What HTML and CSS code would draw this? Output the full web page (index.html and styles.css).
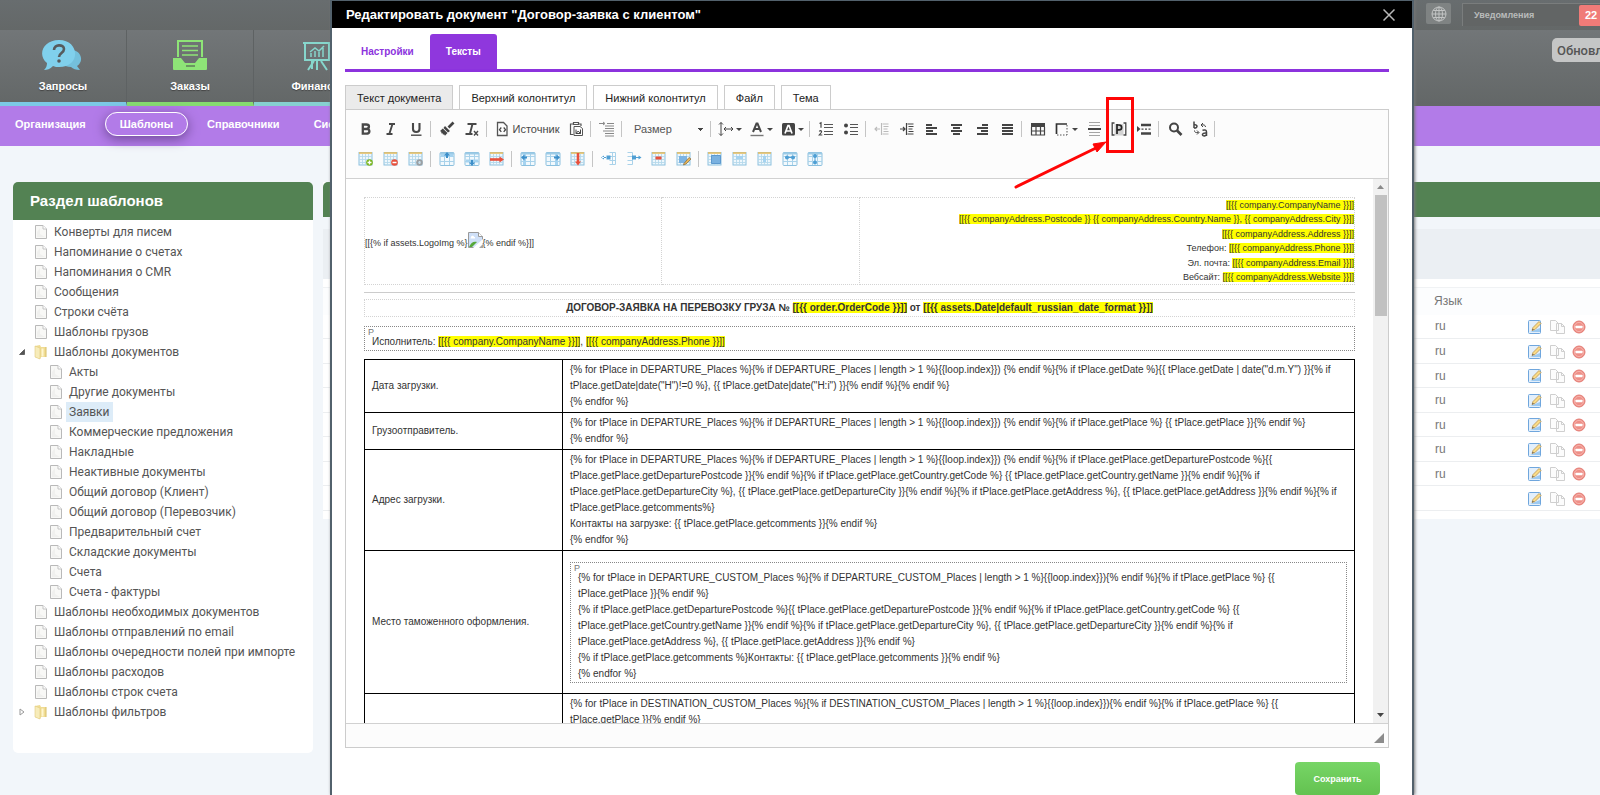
FILE: index.html
```
<!DOCTYPE html>
<html lang="ru">
<head>
<meta charset="utf-8">
<title>Шаблоны документов</title>
<link rel="stylesheet" href="styles.css">
</head>
<body>
<svg class="sprite" aria-hidden="true">
  <symbol id="page" viewBox="0 0 14 16"><path d="M1.500 1.500h7.500l3.500 3.500v9.500h-11z" fill="#f8f8f6" stroke="#b9b9b9"/><path d="M9 1.500v3.500h3.500" fill="#fff" stroke="#c4c4c4"/><path d="M3 8l3-4v6l5 3H3z" fill="#f0f0ee"/></symbol>
  <symbol id="folder" viewBox="0 0 14 16"><path d="M1 2l5-1 1 2h5v10H7l-1 2-5-2z" fill="#f0dc93"/><path d="M1 2l5 2v11l-5-2z" fill="#f7ecba" stroke="#e0cb7c" stroke-width=".6"/><path d="M7.500 4.500h2v8h-2z" fill="#fff6cf"/><path d="M12 3v10" stroke="#d8bf67"/></symbol>
  <symbol id="edit" viewBox="0 0 14 14"><rect x=".5" y=".5" width="12" height="13" rx="1" fill="#e3effb" stroke="#6fa6dd"/><path d="M2 12h10V8z" fill="#9dcaf2"/><path d="M4 10.500l1-3 6-6 2 2-6 6z" fill="#fbdc86" stroke="#b99350" stroke-width=".8"/><path d="M4 10.500l.7-1.800 1.200 1.100z" fill="#555"/></symbol>
  <symbol id="copy" viewBox="0 0 16 14"><path d="M.5.5h5l3 3v7h-8zM6.500 3.500h5l3 3v7h-8z" fill="#fcfcfc" stroke="#cfcfcf"/><path d="M11.500 3.500v3h3" fill="none" stroke="#cfcfcf"/></symbol>
  <symbol id="del" viewBox="0 0 14 14"><circle cx="7" cy="7" r="6" fill="#ee8f87" stroke="#e47c74"/><circle cx="7" cy="7" r="4.600" fill="none" stroke="#f7bbb5" stroke-width=".8"/><rect x="3.500" y="5.800" width="7" height="2.400" rx=".5" fill="#fff"/></symbol>
  <symbol id="tb" viewBox="0 0 16 16"><rect x="1" y="1.500" width="13" height="12.500" fill="#eef7fc" stroke="#8cc0de"/><path d="M1 5.500h13M1 8.500h13M1 11.500h13M4.500 3v11M7.500 3v11M10.500 3v11" stroke="#b5d8eb" stroke-width=".9"/><path d="M1 2h13" stroke="#e6bd62" stroke-width="1.600"/></symbol>
  <symbol id="tc" viewBox="0 0 16 16"><rect x="1" y="1.500" width="14" height="13" rx="1" fill="#f2f9fd" stroke="#8cc0de"/><path d="M1 5.500h14M1 10.500h14M5.500 3v11M10.500 3v11" stroke="#a9d2ea"/><path d="M1 2.500h14" stroke="#9ccbe6" stroke-width="2"/></symbol>
</svg>

<header class="top">
  <div class="topbar">
    <button class="globe" aria-label="Язык"><svg viewBox="0 0 16 16" width="16" height="16" fill="none" stroke="#c2c4c4"><circle cx="8" cy="8" r="7"/><ellipse cx="8" cy="8" rx="3.500" ry="7"/><path d="M1 8h14M8 1v14M2.200 4.500h11.600M2.200 11.500h11.600"/></svg></button>
    <div class="notice"><span>Уведомления</span><b>22</b></div>
  </div>
  <div class="mainbar">
    <nav class="tiles">
      <a href="#" class="tile t1"><svg viewBox="0 0 42 32" width="42" height="32"><path d="M30 11c10 1 12 12 5 16l3 4c-4 0-7-1-9-3-4 0-6-1-8-3 9-2 11-8 9-14z" fill="#74c0dc"/><path d="M17 1c21 0 22 27 0 27-2 0-4 0-6-1-3 3-6 4-9 4 2-2 3-4 3-7C-5 16 1 1 17 1z" fill="#80d0ec"/><path d="M12 11c0-6 10-6 10-1 0 4-5 4-5 8" fill="none" stroke="#565b5d" stroke-width="2.600"/><circle cx="17" cy="22" r="1.800" fill="#565b5d"/></svg>Запросы</a>
      <a href="#" class="tile t2"><svg viewBox="0 0 36 32" width="36" height="32"><path d="M6 18V2h24v16" fill="none" stroke="#8ee477" stroke-width="2"/><path d="M10 7h16M10 11.500h16M10 16h16" stroke="#8ee477" stroke-width="1.600"/><path d="M1 19h8l4 5h10l4-5h8v11q0 1-1 1H2q-1 0-1-1z" fill="#8ee477"/><path d="M14 27h9" stroke="#5f7d5a" stroke-width="1.500"/></svg>Заказы</a>
      <a href="#" class="tile t3"><svg viewBox="0 0 36 32" width="36" height="32" fill="none" stroke="#86d6cc" stroke-width="2"><path d="M4 4h28M6 4v17h24V4M15 22l-6 9M13 22v8M22 22l6 9M18 22v9"/><path d="M12 18v-4M16 18v-6M20 18v-5M24 18V9M11 13l5-4 4 3 5-5" stroke-width="1.500"/></svg>Финансы</a>
    </nav>
    <button class="refresh">Обновления</button>
  </div>
</header>
<nav class="subnav">
  <a href="#">Организация</a><a href="#" class="current">Шаблоны</a><a href="#">Справочники</a><a href="#" class="last">Система</a>
</nav>

<main class="page">
  <section class="card tree">
    <h2>Раздел шаблонов</h2>
    <ul>
      <li><svg><use href="#page"/></svg><span>Конверты для писем</span></li>
      <li><svg><use href="#page"/></svg><span>Напоминание о счетах</span></li>
      <li><svg><use href="#page"/></svg><span>Напоминания о CMR</span></li>
      <li><svg><use href="#page"/></svg><span>Сообщения</span></li>
      <li><svg><use href="#page"/></svg><span>Строки счёта</span></li>
      <li><svg><use href="#page"/></svg><span>Шаблоны грузов</span></li>
      <li class="parent"><svg class="tog" viewBox="0 0 6 6"><path d="M5.500.5v5h-5z" fill="#555" stroke="#333" stroke-width=".6"/></svg><svg><use href="#folder"/></svg><span>Шаблоны документов</span></li>
      <li class="sub"><svg><use href="#page"/></svg><span>Акты</span></li>
      <li class="sub"><svg><use href="#page"/></svg><span>Другие документы</span></li>
      <li class="sub"><svg><use href="#page"/></svg><span class="sel">Заявки</span></li>
      <li class="sub"><svg><use href="#page"/></svg><span>Коммерческие предложения</span></li>
      <li class="sub"><svg><use href="#page"/></svg><span>Накладные</span></li>
      <li class="sub"><svg><use href="#page"/></svg><span>Неактивные документы</span></li>
      <li class="sub"><svg><use href="#page"/></svg><span>Общий договор (Клиент)</span></li>
      <li class="sub"><svg><use href="#page"/></svg><span>Общий договор (Перевозчик)</span></li>
      <li class="sub"><svg><use href="#page"/></svg><span>Предварительный счет</span></li>
      <li class="sub"><svg><use href="#page"/></svg><span>Складские документы</span></li>
      <li class="sub"><svg><use href="#page"/></svg><span>Счета</span></li>
      <li class="sub"><svg><use href="#page"/></svg><span>Счета - фактуры</span></li>
      <li><svg><use href="#page"/></svg><span>Шаблоны необходимых документов</span></li>
      <li><svg><use href="#page"/></svg><span>Шаблоны отправлений по email</span></li>
      <li><svg><use href="#page"/></svg><span>Шаблоны очередности полей при импорте</span></li>
      <li><svg><use href="#page"/></svg><span>Шаблоны расходов</span></li>
      <li><svg><use href="#page"/></svg><span>Шаблоны строк счета</span></li>
      <li class="parent"><svg class="tog" viewBox="0 0 6 8"><path d="M1 1l4 3-4 3z" fill="#fff" stroke="#999"/></svg><svg><use href="#folder"/></svg><span>Шаблоны фильтров</span></li>
    </ul>
  </section>
  <section class="list">
    <div class="listhead"></div>
    <div class="filter"></div>
    <table>
      <thead><tr><th>Язык</th><th aria-label="Действия"></th></tr></thead>
      <tbody>
        <tr><td>ru</td><td><svg><use href="#edit"/></svg><svg class="cp"><use href="#copy"/></svg><svg><use href="#del"/></svg></td></tr>
        <tr><td>ru</td><td><svg><use href="#edit"/></svg><svg class="cp"><use href="#copy"/></svg><svg><use href="#del"/></svg></td></tr>
        <tr><td>ru</td><td><svg><use href="#edit"/></svg><svg class="cp"><use href="#copy"/></svg><svg><use href="#del"/></svg></td></tr>
        <tr><td>ru</td><td><svg><use href="#edit"/></svg><svg class="cp"><use href="#copy"/></svg><svg><use href="#del"/></svg></td></tr>
        <tr><td>ru</td><td><svg><use href="#edit"/></svg><svg class="cp"><use href="#copy"/></svg><svg><use href="#del"/></svg></td></tr>
        <tr><td>ru</td><td><svg><use href="#edit"/></svg><svg class="cp"><use href="#copy"/></svg><svg><use href="#del"/></svg></td></tr>
        <tr><td>ru</td><td><svg><use href="#edit"/></svg><svg class="cp"><use href="#copy"/></svg><svg><use href="#del"/></svg></td></tr>
        <tr><td></td><td><svg><use href="#edit"/></svg><svg class="cp"><use href="#copy"/></svg><svg><use href="#del"/></svg></td></tr>
      </tbody>
    </table>
  </section>
</main>

<div class="modal" role="dialog" aria-labelledby="mt">
  <div class="mhead"><h1 id="mt">Редактировать документ "Договор-заявка с клиентом"</h1><button aria-label="Закрыть"><svg viewBox="0 0 12 12" width="12" height="12"><path d="M.5.5l11 11M11.500.5l-11 11" stroke="#b8b8b8" stroke-width="1.500"/></svg></button></div>
  <div class="mbody">
    <div class="tabs"><button>Настройки</button><button class="on">Тексты</button></div>
    <div class="parts"><button class="on">Текст документа</button><button>Верхний колонтитул</button><button>Нижний колонтитул</button><button>Файл</button><button>Тема</button></div>
    <div class="editor">
      <div class="toolbar">
        <div class="trow">
          <button aria-label="Полужирный"><svg viewBox="0 0 16 16"><path d="M4.800 3.500h3.500c3.600 0 3.400 4.200.2 4.300 4 .2 3.800 4.900-.3 4.900H4.800zM5 8h4" fill="none" stroke="#484848" stroke-width="2.300"/></svg></button>
          <button aria-label="Курсив"><svg viewBox="0 0 16 16"><path d="M6 3h6M3.500 13h6M9.500 3l-3.200 10" fill="none" stroke="#484848" stroke-width="1.900"/></svg></button>
          <button aria-label="Подчёркнутый"><svg viewBox="0 0 16 16"><path d="M5 2v6c0 4 6.500 4 6.500 0V2" fill="none" stroke="#484848" stroke-width="2.100"/><path d="M3 14.200h10.500" stroke="#484848" stroke-width="1.400"/></svg></button>
          <i></i>
          <button aria-label="Копировать форматирование"><svg viewBox="0 0 16 16"><path d="M14.500 1.500l-5 5" stroke="#444" stroke-width="2.600"/><path d="M6 5l5 5-2 1.500-4.500-4.500zM3.800 7.500l4.700 4.500-2.500 2.800-1-1.500-1 .5-.5-1.500-1.500 0 .5-1.300L1 10z" fill="#444"/></svg></button>
          <button aria-label="Убрать форматирование"><svg viewBox="0 0 16 16"><path d="M3.500 3h9M8.500 3L6 12.500M1.500 13h7" fill="none" stroke="#484848" stroke-width="1.900"/><path d="M10 10l4 4.500M14 10l-4 4.500" stroke="#484848" stroke-width="1.400"/></svg></button>
          <i></i>
          <button class="src"><svg viewBox="0 0 16 16"><path d="M3.500 1.500h6l3.500 3.500v9.500H3.500z" fill="none" stroke="#555" stroke-width="1.300"/><path d="M7.300 6.500L5.500 8.700l1.800 2.200M9.700 6.500l1.800 2.200-1.800 2.200" fill="none" stroke="#444" stroke-width="1.300"/></svg>Источник</button>
          <button aria-label="Вставить из Word"><svg viewBox="0 0 16 16"><path d="M5 3H2.500v10.500h3M10 3h3v2M5.500 1.500h5v2h-5z" fill="none" stroke="#555" stroke-width="1.200"/><path d="M6 5.500h6l2.500 2v7H6z" fill="#fff" stroke="#555"/><path d="M8 8.500v4h4.500v-4M8 12.500l2.200-2.500 2.300 2.500" fill="none" stroke="#444"/></svg></button>
          <i></i>
          <button aria-label="Отступ абзаца"><svg viewBox="0 0 16 16"><path d="M0 2.500h5M4 1l2 1.500L4 4M8 2.500h7M6 5h9M6 7.500h9M4 10h11M6 12.500h9M6 15h9" fill="none" stroke="#888"/></svg></button>
          <i></i>
          <select aria-label="Размер"><option>Размер</option></select>
          <i></i>
          <button class="dd" aria-label="Межстрочный интервал"><svg viewBox="0 0 16 16"><path d="M3 1.500v13M1 3.500l2-2 2 2M1 12.500l2 2 2-2M6 8h9M8 6L6 8l2 2M13 6l2 2-2 2" fill="none" stroke="#444"/></svg></button>
          <button class="dd" aria-label="Цвет текста"><svg viewBox="0 0 16 16"><path d="M4 11l3.500-8.500h1L12 11M5.500 8h5" fill="none" stroke="#484848" stroke-width="2"/><path d="M1.500 14.500h13" stroke="#777" stroke-width="1.400"/></svg></button>
          <button class="dd" aria-label="Цвет фона"><svg viewBox="0 0 16 16"><rect x="2" y="2" width="13" height="12.500" rx="1.500" fill="#444"/><path d="M5 12.500l3-8h1l3 8M6 10h5" fill="none" stroke="#fff" stroke-width="1.700"/></svg></button>
          <i></i>
          <button aria-label="Нумерованный список"><svg viewBox="0 0 16 16"><path d="M1.500 2.500l1.500-.8v5M1.300 10.500c1-1.500 3-.5 2 1l-2 2.500h3" fill="none" stroke="#484848" stroke-width="1.200"/><path d="M6 3.500h9M6 6.500h9M6 10.500h9M6 13.500h9" stroke="#555"/></svg></button>
          <button aria-label="Маркированный список"><svg viewBox="0 0 16 16"><circle cx="3" cy="4.500" r="2" fill="#444"/><circle cx="3" cy="11.500" r="2" fill="#444"/><path d="M7 3.500h8M7 6.500h8M7 10.500h8M7 13.500h8" stroke="#555"/></svg></button>
          <i></i>
          <button class="dim" aria-label="Уменьшить отступ"><svg viewBox="0 0 16 16"><path d="M8.500 3h6M9.500 5.500h5M9.500 8h4M9.500 10.500h5M8.500 13h6M7.500 2v12M6 8H1M3 6L1 8l2 2" fill="none" stroke="#444" stroke-width="1.100"/></svg></button>
          <button aria-label="Увеличить отступ"><svg viewBox="0 0 16 16"><path d="M8.500 3h6M9.500 5.500h5M9.500 8h4M9.500 10.500h5M8.500 13h6M7.500 2v12M1 8h5M4 6l2 2-2 2" fill="none" stroke="#444" stroke-width="1.200"/></svg></button>
          <button aria-label="По левому краю"><svg viewBox="0 0 16 16"><path d="M2 4h6M2 7h11M2 10h7M2 13h11" stroke="#444" stroke-width="1.800"/></svg></button>
          <button aria-label="По центру"><svg viewBox="0 0 16 16"><path d="M2 4h11M4 7h7M2 10h11M4 13h7" stroke="#444" stroke-width="1.800"/></svg></button>
          <button aria-label="По правому краю"><svg viewBox="0 0 16 16"><path d="M8 4h6M3 7h11M7 10h7M3 13h11" stroke="#444" stroke-width="1.800"/></svg></button>
          <button aria-label="По ширине"><svg viewBox="0 0 16 16"><path d="M3 4h11M3 7h11M3 10h11M3 13h11" stroke="#444" stroke-width="1.800"/></svg></button>
          <i></i>
          <button aria-label="Таблица"><svg viewBox="0 0 16 16"><path d="M1.500 6v8h13V6M1.500 10h13M6 6v8M10.500 6v8" fill="none" stroke="#444" stroke-width="1.200"/><path d="M1 2h14v4H1z" fill="#444"/></svg></button>
          <button class="dd" aria-label="Границы"><svg viewBox="0 0 16 16"><path d="M2.500 13V3H13" fill="none" stroke="#333" stroke-width="1.700"/><path d="M13 4v10M3 14h10" stroke="#555" stroke-dasharray="1.500 1.500"/></svg></button>
          <button aria-label="Линия"><svg viewBox="0 0 16 16"><path d="M3 1.500h11M3 4.500h11M3 11.500h11M3 14.500h11" stroke="#a5a5a5"/><path d="M2 8h13" stroke="#444" stroke-width="2"/></svg></button>
          <button aria-label="Показать блоки"><svg viewBox="0 0 16 16"><rect x="3.500" y="3" width="9" height="11.500" fill="#d2d2d2"/><path d="M3.500 2H1.200v12h2.300M12.500 2h2.300v12h-2.300" fill="none" stroke="#444" stroke-width="1.300"/><path d="M6 13V3M6 4h2c3.500 0 3.500 4.800 0 4.800H6" fill="none" stroke="#222" stroke-width="1.700"/></svg></button>
          <button aria-label="Разрыв страницы"><svg viewBox="0 0 16 16"><path d="M1 5l3.500 3L1 11z" fill="#444"/><path d="M5 4h10M5 12.500h10" stroke="#444" stroke-width="2.400"/><path d="M5.500 8.200h10" stroke="#444" stroke-width="1.200" stroke-dasharray="2 1.500"/></svg></button>
          <i></i>
          <button aria-label="Найти"><svg viewBox="0 0 16 16"><circle cx="7" cy="6.500" r="4" fill="none" stroke="#444" stroke-width="2"/><path d="M10 9.500l4.500 4.500" stroke="#444" stroke-width="2.600"/></svg></button>
          <button aria-label="Заменить"><svg viewBox="0 0 16 16"><path d="M2 .5V7M2 4c4-1 4 3.500 0 3M10.500 9.200c3-.7 4 0 4 1.800v4M14.500 12c-5-.5-5 3-2 3l2-1" fill="none" stroke="#444" stroke-width="1.500"/><path d="M13.500 6c0-2-2-2.500-4-2M11 2L9 4l2 2M2.500 9.500c0 2 1.500 2.500 4 2M5 9.500l2 2-2 2" fill="none" stroke="#444"/></svg></button>
          <i></i>
        </div>
        <div class="trow">
          <button aria-label="Добавить таблицу"><svg><use href="#tb"/><circle cx="11.500" cy="11.500" r="3.300" fill="#7ab51d"/><path d="M9.500 11.500h4M11.500 9.500v4" stroke="#fff" stroke-width="1.300"/></svg></button>
          <button aria-label="Удалить таблицу"><svg><use href="#tb"/><circle cx="11.500" cy="11.500" r="3.300" fill="#e8503c"/><path d="M9.500 11.500h4" stroke="#fff" stroke-width="1.500"/></svg></button>
          <button aria-label="Свойства таблицы"><svg><use href="#tb"/><circle cx="11.500" cy="11.500" r="2.300" fill="none" stroke="#9a9fa3" stroke-width="2"/></svg></button>
          <i></i>
          <button aria-label="Строка сверху"><svg><use href="#tc"/><path d="M2 3h12v3H2z" fill="#a5d3f0"/><path d="M8 1l3 3.500H9V7H7V4.500H5z" fill="#3d8fc9"/></svg></button>
          <button aria-label="Строка снизу"><svg><use href="#tc"/><path d="M2 8.500h12v3H2z" fill="#a5d3f0"/><path d="M8 15l3-3.500H9V9H7v2.500H5z" fill="#3d8fc9"/></svg></button>
          <button aria-label="Удалить строку"><svg><use href="#tb"/><path d="M1 8.500h10" stroke="#e8503c" stroke-width="2.600"/><path d="M10.500 5.500l4.500 3-4.500 3z" fill="#e8503c"/></svg></button>
          <i></i>
          <button aria-label="Столбец слева"><svg><use href="#tc"/><path d="M3 3h3v11H3z" fill="#a5d3f0"/><path d="M1 6.500l3.500-3v2H7v2H4.500v2z" fill="#3d8fc9"/></svg></button>
          <button aria-label="Столбец справа"><svg><use href="#tc"/><path d="M10 3h3v11h-3z" fill="#a5d3f0"/><path d="M15 6.500l-3.500-3v2H9v2h2.500v2z" fill="#3d8fc9"/></svg></button>
          <button aria-label="Удалить столбец"><svg><use href="#tb"/><path d="M8 2v9" stroke="#e8503c" stroke-width="2.600"/><path d="M5 10.500l3 4 3-4z" fill="#e8503c"/></svg></button>
          <i></i>
          <button aria-label="Ячейка слева"><svg><path d="M8.500 1.500h6v12h-6M8.500 5.500h6M8.500 9.500h6M11.500 1.500v12" fill="none" stroke="#a9d2ea"/><path d="M5.500 4.500h4v4h-4zM1 6h4v1H1zM3 4.500L0 6.500l3 2z" fill="#4f9fd4"/></svg></button>
          <button aria-label="Ячейка справа"><svg><path d="M1.500 1.500h5v12h-5M1.500 5.500h5M1.500 9.500h5" fill="none" stroke="#a9d2ea"/><path d="M6 4.500h4v4H6zM10 6h3v1h-3zM12.500 4.500l3 2-3 2z" fill="#4f9fd4"/></svg></button>
          <button aria-label="Удалить ячейку"><svg><use href="#tb"/><path d="M4.500 5.500h6v3h-6z" fill="#e8503c"/></svg></button>
          <button aria-label="Свойства ячейки"><svg><use href="#tb"/><path d="M3 5h8v7H3z" fill="#7db4e2"/><path d="M8 12.500l5-6 2 1.500-5 5-2.500 1z" fill="#e9b656" stroke="#8a6a3a" stroke-width=".7"/></svg></button>
          <i></i>
          <button aria-label="Выделить таблицу"><svg><use href="#tb"/><path d="M4.500 4.500h9v8h-9z" fill="#79b1e0" stroke="#5d99cf"/></svg></button>
          <button aria-label="Выделить строку"><svg><use href="#tb"/><path d="M4 5h7v3H4z" fill="#a5d3f0"/></svg></button>
          <button aria-label="Выделить столбец"><svg><use href="#tb"/><path d="M6 5h3v6H6z" fill="#a5d3f0"/></svg></button>
          <button aria-label="Объединить ячейки"><svg><use href="#tc"/><circle cx="5" cy="6.500" r="2" fill="#4f9fd4"/><circle cx="11" cy="6.500" r="2" fill="#4f9fd4"/><path d="M3 6.500h10" stroke="#4f9fd4"/></svg></button>
          <button aria-label="Разделить ячейки"><svg><use href="#tc"/><circle cx="8" cy="5" r="2" fill="#4f9fd4"/><circle cx="8" cy="11.500" r="2" fill="#4f9fd4"/><path d="M8 3v10" stroke="#4f9fd4"/></svg></button>
        </div>
      </div>
      <div class="view">
        <div class="doc">
          <table class="company">
            <tr>
              <td class="logo">[[{% if assets.LogoImg %}<svg viewBox="0 0 15 16" width="15" height="16"><path d="M.5.5h10l4 4v11H.5z" fill="#cfe0f8" stroke="#9a9a9a"/><path d="M10.500.5v4h4" fill="#fff" stroke="#9a9a9a"/><path d="M3 5c1-2 3-1 3 0h1v1.500H2.500z" fill="#fff"/><path d="M1 15c2-5 5-6 8-5l-5 5z" fill="#56a83a"/><path d="M5 16L15 7v9z" fill="#fff"/><path d="M11 16l4-4v4z" fill="#a5a5a5"/></svg>{% endif %}]]</td>
              <td class="gap"></td>
              <td class="info"><mark>[[{{ company.CompanyName }}]]</mark><br><mark>[[{{ companyAddress.Postcode }} {{ companyAddress.Country.Name }}, {{ companyAddress.City }}]]</mark><br><mark>[[{{ companyAddress.Address }}]]</mark><br>Телефон: <mark>[[{{ companyAddress.Phone }}]]</mark><br>Эл. почта: <mark>[[{{ companyAddress.Email }}]]</mark><br>Вебсайт: <mark>[[{{ companyAddress.Website }}]]</mark></td>
            </tr>
          </table>
          <hr>
          <div class="doctitle">ДОГОВОР-ЗАЯВКА НА ПЕРЕВОЗКУ ГРУЗА № <mark>[[{{ order.OrderCode }}]]</mark> от <mark>[[{{ assets.Date|default_russian_date_format }}]]</mark></div>
          <p class="block">Исполнитель: <mark>[[{{ company.CompanyName }}]]</mark>, <mark>[[{{ companyAddress.Phone }}]]</mark></p>
          <table class="terms">
            <tr><td>Дата загрузки.</td><td>{% for tPlace in DEPARTURE_Places %}{% if DEPARTURE_Places | length &gt; 1 %}{{loop.index}}) {% endif %}{% if tPlace.getDate %}{{ tPlace.getDate | date("d.m.Y") }}{% if tPlace.getDate|date("H")!=0 %}, {{ tPlace.getDate|date("H:i") }}{% endif %}{% endif %}<br>{% endfor %}</td></tr>
            <tr><td>Грузоотправитель.</td><td>{% for tPlace in DEPARTURE_Places %}{% if DEPARTURE_Places | length &gt; 1 %}{{loop.index}}) {% endif %}{% if tPlace.getPlace %} {{ tPlace.getPlace }}{% endif %}<br>{% endfor %}</td></tr>
            <tr><td>Адрес загрузки.</td><td>{% for tPlace in DEPARTURE_Places %}{% if DEPARTURE_Places | length &gt; 1 %}{{loop.index}}) {% endif %}{% if tPlace.getPlace.getDeparturePostcode %}{{ tPlace.getPlace.getDeparturePostcode }}{% endif %}{% if tPlace.getPlace.getCountry.getCode %} {{ tPlace.getPlace.getCountry.getName }}{% endif %}{% if tPlace.getPlace.getDepartureCity %}, {{ tPlace.getPlace.getDepartureCity }}{% endif %}{% if tPlace.getPlace.getAddress %}, {{ tPlace.getPlace.getAddress }}{% endif %}{% if tPlace.getPlace.getcomments%}<br>Контакты на загрузке: {{ tPlace.getPlace.getcomments }}{% endif %}<br>{% endfor %}</td></tr>
            <tr><td>Место таможенного оформления.</td><td><p class="block">{% for tPlace in DEPARTURE_CUSTOM_Places %}{% if DEPARTURE_CUSTOM_Places | length &gt; 1 %}{{loop.index}}){% endif %}{% if tPlace.getPlace %} {{ tPlace.getPlace }}{% endif %}<br>{% if tPlace.getPlace.getDeparturePostcode %}{{ tPlace.getPlace.getDeparturePostcode }}{% endif %}{% if tPlace.getPlace.getCountry.getCode %} {{ tPlace.getPlace.getCountry.getName }}{% endif %}{% if tPlace.getPlace.getDepartureCity %}, {{ tPlace.getPlace.getDepartureCity }}{% endif %}{% if tPlace.getPlace.getAddress %}, {{ tPlace.getPlace.getAddress }}{% endif %}<br>{% if tPlace.getPlace.getcomments %}Контакты: {{ tPlace.getPlace.getcomments }}{% endif %}<br>{% endfor %}</p></td></tr>
            <tr><td></td><td>{% for tPlace in DESTINATION_CUSTOM_Places %}{% if DESTINATION_CUSTOM_Places | length &gt; 1 %}{{loop.index}}){% endif %}{% if tPlace.getPlace %} {{ tPlace.getPlace }}{% endif %}</td></tr>
          </table>
        </div>
        <div class="scroll"><svg viewBox="0 0 7 4"><path d="M0 4l3.500-4L7 4z" fill="#8a8a8a"/></svg><div></div><svg viewBox="0 0 7 4"><path d="M0 0l3.500 4L7 0z" fill="#444"/></svg></div>
      </div>
      <div class="foot"><svg viewBox="0 0 10 10" width="10" height="10"><path d="M10 0v10H0z" fill="#8c8c8c"/></svg></div>
    </div>
    <div class="actions"><button>Сохранить</button></div>
  </div>
  <svg class="pointer" viewBox="0 0 122 94" width="122" height="94" fill="none" stroke="#ff0606"><rect x="93.500" y="2.500" width="25" height="53" stroke-width="3"/><path d="M2 91L84 51" stroke-width="3" stroke-linecap="round"/><path d="M92 46l-9 10-4-8z" fill="#ff0606" stroke-width="1"/></svg>
</div>
</body>
</html>
```
FILE: styles.css
```
* { box-sizing: border-box; }
body { margin: 0; height: 100vh; overflow: hidden; position: relative; background: #f2f6fa; font-family: "Liberation Sans", Arial, sans-serif; font-size: 12px; color: #555; }
button { border: 0; background: none; padding: 0; font: inherit; color: inherit; }
a { text-decoration: none; color: #fff; }
.sprite { position: absolute; width: 0; height: 0; }

.topbar { height: 30px; background: linear-gradient(#686d6f, #646868); display: flex; justify-content: flex-end; align-items: flex-start; gap: 11px; padding-top: 3px; overflow: hidden; }
.globe { width: 25px; height: 21px; background: #7f8383; border-radius: 2px; display: grid; place-items: center; }
.notice { width: 138px; height: 23px; border: 1px solid #7a7d7d; border-width: 1px 0 0 1px; background: #626565; display: flex; justify-content: space-between; align-items: center; padding-left: 11px; color: #b9bbbb; font-weight: bold; font-size: 9px; }
.notice b { width: 21px; height: 21px; line-height: 20px; padding-left: 6px; background: #f07b78; color: #fff; font-size: 11px; border-radius: 2px 0 0 2px; overflow: hidden; }
.mainbar { height: 76px; background: linear-gradient(#727678, #636767); display: flex; justify-content: space-between; align-items: flex-start; }
.tiles { display: flex; height: 100%; }
.tile { width: 127px; display: flex; flex-direction: column; align-items: center; gap: 7px; padding-top: 9px; font-size: 11px; line-height: 16px; font-weight: bold; border-right: 1px solid #5e6263; border-bottom: 4px solid; text-shadow: 0 1px 1px #444; color: #fff; }
.t1 { border-bottom-color: #7cc9e6; }
.t2 { border-bottom-color: #86db70; }
.t3 { border-bottom-color: #86d0d0; }
.refresh { margin-top: 8px; width: 48px; height: 24px; padding-left: 5px; background: #c5c6c6; border-radius: 5px 0 0 5px; font: 500 13px Roboto, sans-serif; color: #555; text-align: left; overflow: hidden; }
.subnav { height: 40px; background: #b27be8; display: flex; align-items: center; padding-left: 15px; gap: 19px; font-weight: bold; font-size: 11px; }
.subnav a { padding-bottom: 4px; }
.subnav .last { margin-left: 15px; }
.subnav .current { height: 24px; margin-bottom: 4px; line-height: 22px; padding: 0 14px; border: 1px solid #fff; border-radius: 12px; box-shadow: 0 3px 12px #6f4a97; }

.page { display: flex; align-items: flex-start; gap: 10px; padding: 36px 0 0 13px; }
.card { width: 300px; flex: none; background: #fff; border-radius: 5px; }
.tree h2 { margin: 0; height: 38px; line-height: 38px; padding-left: 17px; background: #538253; color: #fff; font-size: 15px; border-radius: 5px 5px 0 0; }
.tree ul { list-style: none; margin: 0; padding: 2px 0 31px 21px; font: 12px/20px Roboto, "Noto Sans", sans-serif; }
.tree li { display: flex; align-items: center; height: 20px; white-space: nowrap; }
.tree li svg { width: 14px; height: 16px; }
.tree li span { padding: 0 3px; margin-left: 3px; }
.tree .sub { padding-left: 15px; }
.tree .parent { margin-left: -15px; }
.tree li .tog { width: 6px; height: 8px; margin-right: 9px; }
.tree .sel { background: #ddecf8; }

.list { flex: 1; background: #fff; padding-bottom: 8px; }
.listhead { height: 35px; background: #538253; border-radius: 5px 0 0 0; }
.filter { height: 62px; border-top: 12px solid #f2f6fa; background: #ebeff3; margin-bottom: 8px; }
.list table { width: 100%; border-collapse: collapse; border-top: 1px solid #f0f2f4; }
.list th { height: 27px; text-align: left; background: #fcfdfe; color: #777; font-weight: normal; font-size: 12px; padding: 0 0 0 1111px; }
.list td { height: 24px; padding: 0 0 0 1112px; color: #777; line-height: 16px; border-bottom: 1px solid #eceef0; }
.list tr:nth-child(even) td { height: 25px; }
.list th + th, .list td + td { padding: 0; width: 72px; }
.list td svg { width: 14px; height: 14px; margin-right: 8px; vertical-align: middle; }
.list td .cp { width: 16px; margin-right: 6px; }
.list td:last-child { white-space: nowrap; }

.modal { position: absolute; top: 0; bottom: 0; left: 330px; right: 186px; background: #fff; border: 2px solid #52616c; border-width: 1px 2px 0 2px; box-shadow: 1px 0 3px #777; }
.mhead { height: 27px; background: #000; display: flex; justify-content: space-between; align-items: center; padding: 0 17px 0 14px; }
.mhead h1 { margin: 0; color: #fff; font-size: 13px; }
.mhead svg { display: block; }
.mbody { padding: 6px 23px 0 13px; }
.tabs { display: flex; height: 38px; border-bottom: 3px solid #8c33dd; font-weight: bold; font-size: 10px; color: #8c33dd; }
.tabs button { padding: 0 16px; }
.tabs .on { background: #8f37dd; color: #fff; border-radius: 3px 3px 0 0; }
.parts { display: flex; gap: 6px; margin-top: 13px; color: #222; font-size: 11px; }
.parts button { height: 24px; padding: 0 11px; border: 1px solid #ccc; border-bottom: 0; background: #fff; }
.parts .on { background: #ebebeb; }
.editor { border: 1px solid #ccc; }
.toolbar { height: 69px; background: #fcfcfc; border-bottom: 1px solid #d1d1d1; padding: 4px 7px; }
.trow { display: flex; height: 30px; align-items: center; color: #484848; font-size: 11px; }
.trow i { width: 1px; height: 16px; margin: 0 3px 0 2px; background: #c5c5c5; }
.trow button { width: 25px; height: 28px; display: flex; align-items: center; justify-content: center; flex: none; }
.trow svg { width: 16px; height: 16px; flex: none; }
.trow .src { width: 73px; gap: 3px; }
.trow .dim { opacity: .35; }
.trow .dd { width: 31px; justify-content: flex-start; padding-left: 4px; gap: 2px; }
.trow .dd::after { content: ""; border: 3px solid transparent; border-top-color: #444; border-bottom: 0; }
.trow select { width: 83px; height: 26px; border: 0; padding: 0 0 0 9px; appearance: none; font: 11px "Liberation Sans", sans-serif; color: #555; background: conic-gradient(from -45deg at 50% 100%, #444 90deg, transparent 0) 73px 12px / 6px 3px no-repeat; background: linear-gradient(#444, #444) 73px 12px / 5px 1px no-repeat, linear-gradient(#444, #444) 74px 13px / 3px 1px no-repeat, linear-gradient(#444, #444) 75px 14px / 1px 1px no-repeat; }

.view { height: 544px; display: flex; overflow: hidden; }
.doc { flex: 1; min-width: 0; padding: 18px 18px 0; font-size: 10px; line-height: 16px; color: #333; }
.doc mark { background: #ff0; color: #333; }
.company { width: 100%; border-collapse: collapse; font-size: 9px; line-height: 1.6; }
.company td { border: 1px dotted #d3d3d3; padding: 0; }
.company .logo { width: 30%; }
.company .gap { width: 20%; }
.company .info { text-align: right; }
.logo svg { vertical-align: -2px; }
.doc hr { margin: 7px 0 6px; border: 0; height: 1px; background: #ccc; }
.doctitle { border: 1px dotted #d3d3d3; text-align: center; font-weight: bold; }
.block { margin: 9px 0 8px; border: 1px dotted #888; padding: 7px 7px 0; position: relative; }
.block::before { content: "P"; position: absolute; left: 3px; top: 1px; font-size: 9px; line-height: 9px; color: #777; }
.terms { width: 100%; border-collapse: collapse; }
.terms td { border: 1px solid #000; padding: 2px 7px; }
.terms td:first-child { width: 20%; }
.scroll { width: 15px; background: #f1f1f1; display: flex; flex-direction: column; align-items: center; padding: 6px 0; gap: 6px; }
.scroll svg { width: 7px; height: 4px; }
.scroll div { width: 12px; height: 121px; background: #c1c1c1; margin-bottom: auto; }
.foot { height: 24px; background: #fcfcfc; border-top: 1px solid #d1d1d1; display: flex; justify-content: flex-end; align-items: flex-end; padding: 4px; }
.actions { display: flex; justify-content: flex-end; padding: 14px 9px 0 0; }
.actions button { width: 85px; height: 33px; border-radius: 4px; background: linear-gradient(#77d566, #63c250); color: #fff; font-weight: bold; font-size: 9px; }
.pointer { position: absolute; left: 682px; top: 95px; }
```
